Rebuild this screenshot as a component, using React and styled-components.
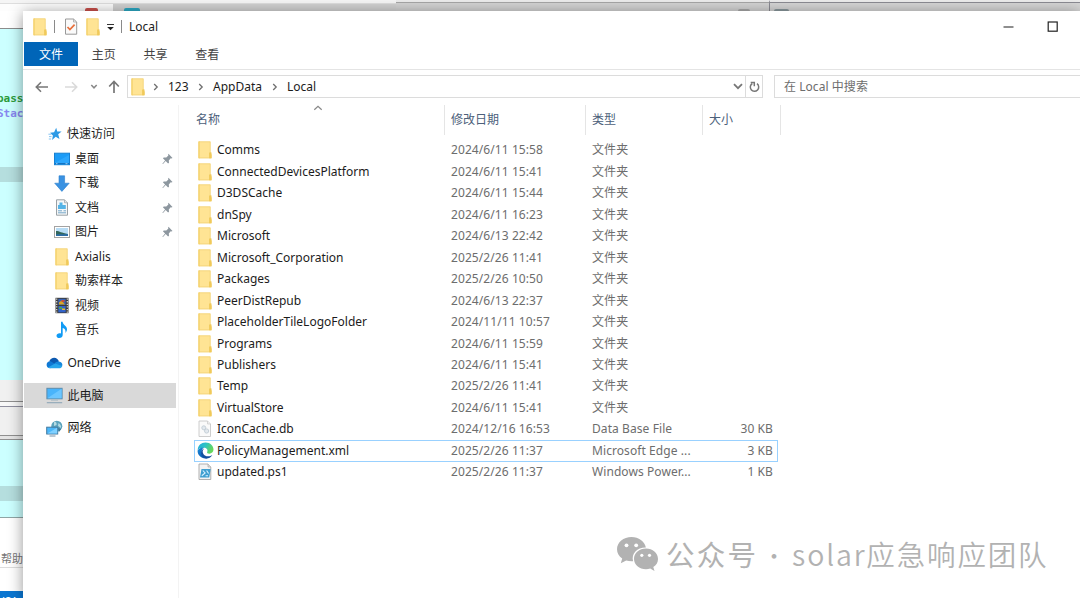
/* eslint-disable react/prop-types */
import styled, { createGlobalStyle } from 'styled-components';

const folders = [
  ["Comms", "2024/6/11 15:58"],
  ["ConnectedDevicesPlatform", "2024/6/11 15:41"],
  ["D3DSCache", "2024/6/11 15:44"],
  ["dnSpy", "2024/6/11 16:23"],
  ["Microsoft", "2024/6/13 22:42"],
  ["Microsoft_Corporation", "2025/2/26 11:41"],
  ["Packages", "2025/2/26 10:50"],
  ["PeerDistRepub", "2024/6/13 22:37"],
  ["PlaceholderTileLogoFolder", "2024/11/11 10:57"],
  ["Programs", "2024/6/11 15:59"],
  ["Publishers", "2024/6/11 15:41"],
  ["Temp", "2025/2/26 11:41"],
  ["VirtualStore", "2024/6/11 15:41"],
];

const files = [
  ...folders.map(([name, date]) => ({ name, date, type: "文件夹", size: "", icon: FolderIcon })),
  { name: "IconCache.db", date: "2024/12/16 16:53", type: "Data Base File", size: "30 KB", icon: DbIcon },
  { name: "PolicyManagement.xml", date: "2025/2/26 11:37", type: "Microsoft Edge ...", size: "3 KB", icon: EdgeIcon, focused: true },
  { name: "updated.ps1", date: "2025/2/26 11:37", type: "Windows Power...", size: "1 KB", icon: ScriptIcon },
];

const quickAccess = [
  { name: "桌面", icon: DesktopIcon, pinned: true },
  { name: "下载", icon: DownloadIcon, pinned: true },
  { name: "文档", icon: DocumentIcon, pinned: true },
  { name: "图片", icon: PictureIcon, pinned: true },
  { name: "Axialis", icon: FolderIcon },
  { name: "勒索样本", icon: FolderIcon },
  { name: "视频", icon: VideoIcon },
  { name: "音乐", icon: MusicIcon },
];

function FolderIcon() {
  return (
    <svg width="16" height="18" viewBox="0 0 16 18">
      <path d="M1.500.5h12v12.400l1 .5v3.800h-13z" fill="#ffe494" />
      <path d="M1.500.5h1.400v16.700H1.500z" fill="#f9d777" />
      <path d="M1.800.8h11.400v12.400l1 .4v3.300H1.800z" fill="none" stroke="#f1d173" strokeWidth=".7" />
      <path d="M12.100 11.700q1-1 2.400-.2v5.700h-2.400z" fill="#f0c95a" />
    </svg>
  );
}

function DbIcon() {
  return (
    <svg width="16" height="18" viewBox="0 0 16 18">
      <path d="M2 1h8.500l3 3v12.500H2z" fill="#fafafa" stroke="#c8c8c8" strokeWidth=".9" />
      <path d="M10.500 1v3h3" fill="#eee" stroke="#c8c8c8" strokeWidth=".7" />
      <circle cx="6.800" cy="7.800" r="2" fill="#e3e9ee" stroke="#c6d0d8" />
      <circle cx="9.600" cy="11" r="2.100" fill="#e3e9ee" stroke="#c6d0d8" />
    </svg>
  );
}

function EdgeIcon() {
  return (
    <svg width="17" height="17" viewBox="0 0 24 24">
      <defs>
        <linearGradient id="edgeTop" x1="0" y1="0" x2="1" y2="0.4">
          <stop offset="0" stopColor="#21a8dd" />
          <stop offset=".5" stopColor="#2cc3c4" />
          <stop offset="1" stopColor="#66d85b" />
        </linearGradient>
        <linearGradient id="edgeSide" x1="0" y1="0" x2="0.6" y2="1">
          <stop offset="0" stopColor="#1a8bd8" />
          <stop offset="1" stopColor="#0c59b3" />
        </linearGradient>
      </defs>
      <path d="M1 12C1 5 6 .8 12 .8c7 0 11.300 5 11.300 9.900 0 4-3 5.800-5.800 5.800-2.500 0-3.800-1-3.200-2.300C16 10.500 13 8 10 8c-5 0-8 1-9 4z" fill="url(#edgeTop)" />
      <path d="M.8 12.500C2 9 6 7.200 10 7.800c-2.500 1.200-4 4.200-3 8.200 1 4 4.500 6.800 8 7C7 25 .8 19 .8 12.500z" fill="url(#edgeSide)" />
      <path d="M10.200 9.300c-3 2-3 7.200 1 9.700 3.500 2 7.500 1.500 10.500-.8-2 3.300-5 5-8.200 5-4.500 0-7.700-4-7.700-7.700 0-3.500 2.200-5.700 4.400-6.200z" fill="#134f9e" />
    </svg>
  );
}

function ScriptIcon() {
  return (
    <svg width="16" height="18" viewBox="0 0 16 18">
      <path d="M2 1h9l2.800 3v12.500H2z" fill="#f3f3f3" stroke="#a8a8a8" strokeWidth=".9" />
      <path d="M11 1v3h2.800" fill="#ddd" stroke="#a8a8a8" strokeWidth=".7" />
      <path d="M4.500 6h9.200l-1.500 8.500H3z" fill="#3f9fd0" />
      <path d="M5.800 7.500l2.300 2.500-3.300 2.700M8.600 12.700H11M9.600 7.500l2 3" stroke="#d9f1ff" strokeWidth="1.100" fill="none" />
    </svg>
  );
}

function StarIcon() {
  return (
    <svg width="14" height="14" viewBox="0 0 14 14">
      <path d="M8.200.8l1 3.700 4.400-.1-3.400 2.900 1.300 4.800-3.800-2.300-3.600 3.200.8-4.500-2.800-2.700 4-.5z" fill="#2c9ae6" />
      <path d="M.4 7.200h3M1 9.600h2.500M.8 12h2.400" stroke="#7abff0" strokeWidth=".9" />
    </svg>
  );
}

function DesktopIcon() {
  return (
    <svg width="16" height="14" viewBox="0 0 16 14">
      <rect x=".5" y="1.200" width="15" height="11.500" fill="#1c9cf7" stroke="#1680d2" />
      <path d="M1 10.800L15 3v9.200H1z" fill="#35adff" opacity=".7" />
      <path d="M1 11.700h14" stroke="#0e69b5" />
      <path d="M2 11.700h1.500M11.500 11.700h2" stroke="#bfe3ff" strokeWidth=".8" />
    </svg>
  );
}

function DownloadIcon() {
  return (
    <svg width="16" height="17" viewBox="0 0 16 17">
      <path d="M5 .8h5.600v7.400h4.600L7.900 16.400.7 8.200H5z" fill="#3a92e2" stroke="#2b7fcc" strokeWidth=".6" />
    </svg>
  );
}

function DocumentIcon() {
  return (
    <svg width="16" height="17" viewBox="0 0 16 17">
      <path d="M2.500.8h8l3 3v12.400h-11z" fill="#f4f6f7" stroke="#9aa1a6" />
      <path d="M10.500.8v3h3" fill="#dfe4e7" stroke="#9aa1a6" strokeWidth=".7" />
      <path d="M5.500 3.500h3V6h3.300v4H4V6h1.500z" fill="#54b3e6" />
      <path d="M4 11.800h4M4 13.800h8M9.500 11.800H12" stroke="#75a8c9" />
    </svg>
  );
}

function PictureIcon() {
  return (
    <svg width="16" height="14" viewBox="0 0 16 14">
      <rect x=".5" y="1.500" width="15" height="11" fill="#fff" stroke="#a3a3a3" />
      <rect x="2" y="3" width="12" height="8" fill="#b7dcf5" />
      <path d="M2 6c4 0 5 2 12 3v2H2z" fill="#33675c" />
      <path d="M2 9.400c4-.5 8 0 12-.5V11H2z" fill="#2d6da6" />
    </svg>
  );
}

function VideoIcon() {
  return (
    <svg width="16" height="17" viewBox="0 0 16 17">
      <path d="M1.500.8h13v15.400h-13z" fill="#3b3b3b" />
      <path d="M2.700 1.500v14.500M13.300 1.500v14.500" stroke="#ddd" strokeWidth="1.200" strokeDasharray="1.300 1.300" />
      <path d="M4.300 1.800h7.400v6H4.300z" fill="#3a63b5" />
      <path d="M4.300 9h7.400v6.400H4.300z" fill="#3263c9" />
      <path d="M5 5.500l2.500-2L11 7.500H5z" fill="#d8a727" />
      <path d="M7.500 3h3v2h-3z" fill="#c74e3b" />
      <path d="M5 10h3v2H5z" fill="#4da054" />
      <path d="M8 11.500h3V13H8z" fill="#e0be34" />
    </svg>
  );
}

function MusicIcon() {
  return (
    <svg width="16" height="18" viewBox="0 0 16 18">
      <path d="M7 .8h1.600c.3 3.300 4.400 4 4.400 7.500 0 1.500-.6 2.700-1.600 3.600.7-3-.8-4.300-2.700-4.900v7.100c0 1.800-1.500 3-3.300 3-1.600 0-2.900-.9-2.900-2.300 0-1.900 2.200-3 4.500-2.300z" fill="#109bf5" />
    </svg>
  );
}

function OneDriveIcon() {
  return (
    <svg width="17" height="12" viewBox="0 0 17 12">
      <path d="M3.300 4.200C4.500 1 8.700-.3 11.300 2c.9.700 1.400 1.500 1.600 2.600L8 7.500z" fill="#0c59b0" />
      <path d="M1 9.500C-.3 6.500 2 3.800 5 4.400l6.500 4-7.500 2.800C2.500 11.200 1.500 10.500 1 9.500z" fill="#0f78d4" />
      <path d="M8.500 6.800c1-1.600 2.500-2.400 4.400-2.200 2.200.2 3.800 2 3.500 4l-2 1.200z" fill="#1587dc" />
      <path d="M2 10.500l7-4 7.300 2.500c-.5 1.400-1.600 2.300-3.300 2.300H4.200c-.9 0-1.600-.3-2.200-.8z" fill="#27a5ec" />
    </svg>
  );
}

function ComputerIcon() {
  return (
    <svg width="17" height="17" viewBox="0 0 17 17">
      <rect x=".9" y="1.300" width="15.200" height="10.500" fill="#49b4fb" stroke="#5c8cac" />
      <path d="M1.400 11.300L15.600 1.800v9.500z" fill="#6cc6ff" />
      <path d="M5 12.600h7v1H5z" fill="#a6b8c4" />
      <path d="M.8 15.700h15.400" stroke="#8ea7b8" strokeWidth="1.100" />
    </svg>
  );
}

function NetworkIcon() {
  return (
    <svg width="17" height="17" viewBox="0 0 17 17">
      <circle cx="10.800" cy="6.200" r="5.500" fill="#5aa2bc" />
      <path d="M8 2c2-.6 3 1 2.500 3L8 6zM12.500 3c2 1 3 3 2.500 5l-3-2z" fill="#b5dae2" />
      <path d="M12 8l3 1-2 3z" fill="#3d7695" />
      <rect x=".7" y="7.200" width="11" height="6.800" fill="#4bb7fa" stroke="#42799e" />
      <path d="M1.200 13.500l10-5.800v5.800z" fill="#7fd0ff" />
      <path d="M3.500 16h6" stroke="#7692a6" />
    </svg>
  );
}

function PinIcon() {
  return (
    <svg width="11" height="12" viewBox="0 0 11 12">
      <path d="M6.500.8l4 4.200-1.100.4-.7-.2-1.900 2.200.2 2.300-.9.900L3.700 8 1 10.900l-.6.200.2-.7L3.100 7.400.9 5.200l.9-.8 2.500.2 2.100-2-.3-.8z" fill="#8d979f" />
    </svg>
  );
}

function CheckPageIcon() {
  return (
    <svg width="14" height="17" viewBox="0 0 14 17">
      <path d="M1.500 1h8L12.700 4v12.200H1.500z" fill="#fafafa" stroke="#999" />
      <path d="M9.500 1v3h3" fill="none" stroke="#a5a5a5" strokeWidth=".8" />
      <path d="M3.500 9l2.400 2.600 4.700-5" fill="none" stroke="#e8703c" strokeWidth="1.700" />
    </svg>
  );
}

function WechatIcon() {
  return (
    <svg width="43" height="37" viewBox="0 0 43 37">
      <path d="M15.500 1C7.500 1 1 6.400 1 13.300c0 3.800 2 7.100 5.200 9.300l-1.400 4.600 5.400-2.800c1.700.5 3.500.8 5.500.8h1.400C15 17.500 21.500 11.300 29.900 11.500 28.600 5.500 22.700 1 15.500 1z" fill="#b2b2b2" />
      <path d="M30 12.600c-6.700 0-12 4.600-12 10.300s5.300 10.300 12 10.300c1.500 0 2.900-.2 4.200-.6l4.300 2.400-1.200-3.900c2.900-1.900 4.700-4.800 4.700-8.200 0-5.700-5.400-10.300-12-10.300z" fill="#b2b2b2" />
      <g fill="#fff">
        <circle cx="10.500" cy="9.300" r="1.900" />
        <circle cx="20.200" cy="9.300" r="1.900" />
        <circle cx="25.800" cy="19.300" r="1.600" />
        <circle cx="33.500" cy="19.300" r="1.600" />
      </g>
    </svg>
  );
}

function Chevron() {
  return (
    <svg width="6" height="8" viewBox="0 0 6 8">
      <path d="M1.200 1l3 3-3 3" fill="none" stroke="#707070" strokeWidth="1.300" />
    </svg>
  );
}

function TitleBar() {
  return (
    <TitleRow>
      <FolderIcon />
      <Tick />
      <CheckPageIcon />
      <FolderIcon />
      <svg width="9" height="8" viewBox="0 0 9 8">
        <path d="M1 1.500h7" stroke="#333" />
        <path d="M1.200 4h6.600L4.500 7.300z" fill="#222" />
      </svg>
      <Tick />
      <Title>Local</Title>
      <WindowButtons>
        <svg width="11" height="12" viewBox="0 0 11 12">
          <path d="M.5 6h10" stroke="#444" strokeWidth="1.200" />
        </svg>
        <svg width="11" height="12" viewBox="0 0 11 12">
          <rect x="1.200" y="1" width="9" height="9.200" fill="none" stroke="#222" strokeWidth="1.200" />
        </svg>
      </WindowButtons>
    </TitleRow>
  );
}

function AddressBar() {
  return (
    <AddressRow>
      <NavButtons>
        <svg width="14" height="12" viewBox="0 0 14 12">
          <path d="M13 6H1.500M6 1.300L1.300 6 6 10.700" fill="none" stroke="#777" strokeWidth="1.600" />
        </svg>
        <svg width="14" height="12" viewBox="0 0 14 12">
          <path d="M1 6h11.500M8 1.300L12.700 6 8 10.700" fill="none" stroke="#dadada" strokeWidth="1.600" />
        </svg>
        <svg width="8" height="6" viewBox="0 0 8 6">
          <path d="M1.300 1l2.700 2.800L6.700 1" fill="none" stroke="#888" strokeWidth="1.500" />
        </svg>
        <svg width="12" height="14" viewBox="0 0 12 14">
          <path d="M6 13V1.500M1.200 6.500L6 1.500l4.800 5" fill="none" stroke="#777" strokeWidth="1.700" />
        </svg>
      </NavButtons>
      <PathBox>
        <FolderIcon />
        <Chevron />
        <Crumb $width={45}>123</Crumb>
        <Chevron />
        <Crumb $width={74}>AppData</Crumb>
        <Chevron />
        <Crumb>Local</Crumb>
        <PathActions>
          <svg width="10" height="7" viewBox="0 0 10 7">
            <path d="M1 1.200l4 4 4-4" fill="none" stroke="#777" strokeWidth="1.800" />
          </svg>
          <Refresh>
            <svg width="11" height="12" viewBox="0 0 11 12">
              <path d="M8 2.700a4.200 4.200 0 1 1-4.700-.2" fill="none" stroke="#777" strokeWidth="1.500" />
              <path d="M1.700 1.400h3.600v3.800" fill="none" stroke="#777" strokeWidth="1.500" />
            </svg>
          </Refresh>
        </PathActions>
      </PathBox>
      <SearchBox>在 Local 中搜索</SearchBox>
    </AddressRow>
  );
}

function Sidebar() {
  return (
    <SidebarParent>
      <SidebarItem $indent={26}>
        <StarIcon />
        <span>快速访问</span>
      </SidebarItem>
      {quickAccess.map((item) => (
        <SidebarItem key={item.name} $indent={32}>
          <item.icon />
          <span>{item.name}</span>
          {item.pinned && <PinSlot><PinIcon /></PinSlot>}
        </SidebarItem>
      ))}
      <SidebarItem $indent={24} $gap>
        <OneDriveIcon />
        <span>OneDrive</span>
      </SidebarItem>
      <SidebarItem $indent={24} $gap $active>
        <ComputerIcon />
        <span>此电脑</span>
      </SidebarItem>
      <SidebarItem $indent={24} $gap>
        <NetworkIcon />
        <span>网络</span>
      </SidebarItem>
    </SidebarParent>
  );
}

function FileList() {
  return (
    <ListPane>
      <ListHeader>
        <HeaderCell>
          名称
          <SortMark width="10" height="6" viewBox="0 0 10 6">
            <path d="M1.300 4.800L5 1.300l3.700 3.500" fill="none" stroke="#888" strokeWidth="1.200" />
          </SortMark>
        </HeaderCell>
        <HeaderCell>修改日期</HeaderCell>
        <HeaderCell>类型</HeaderCell>
        <HeaderCell>大小</HeaderCell>
      </ListHeader>
      {files.map((file) => (
        <FileRow key={file.name} $focused={file.focused}>
          <IconSlot><file.icon /></IconSlot>
          <FileName>{file.name}</FileName>
          <span>{file.date}</span>
          <span>{file.type}</span>
          <FileSize>{file.size}</FileSize>
        </FileRow>
      ))}
    </ListPane>
  );
}

export default function App() {
  return (
    <>
      <GlobalStyle />
      <Screen>
        <TopEdge>
          <TopTab $width={113} $bg="#fdfdfd"><TabDot $color="#c9504b" $left={85} $width={13} /></TopTab>
          <TopTab $width={283} $bg="#d2d2d2"><TabDot $color="#2ca9c4" $left={11} $width={16} /></TopTab>
          <TopTab $width={373} $bg="#d4d4d4" $line="#a6a6a6"><TabDot $color="#a9a9a9" $left={342} $width={12} /></TopTab>
          <TopTab $width={311} $bg="#d6d6d6" $line="#8b8b93" $edge><TabDot $color="#8b999d" $left={4} $width={15} /></TopTab>
        </TopEdge>
        <LeftEdge>
          <Strip $height={17.500} $bg="#fff" $line="#8c8c8c" />
          <CodeStrip>
            <CodeText $color="#2d9c3c">pass</CodeText>
            <CodeText $color="#8888f0">Stac</CodeText>
          </CodeStrip>
          <Strip $height={15} $bg="#b5dede" />
          <Strip $height={198} $bg="#ccffff" />
          <Strip $height={22} $bg="#f0f0f0" $line="#8f8f8f" />
          <Strip $height={5} $bg="#f8f8f8" $line="#8f8f9f" />
          <Strip $height={29} $bg="#f0f0f0" $line="#8f8f8f" />
          <Strip $height={4} $bg="#e4e4e4" $line="#8f8f8f" />
          <Strip $height={46} $bg="#ccffff" />
          <Strip $height={15} $bg="#b5dede" />
          <Strip $height={17} $bg="#ccffff" $line="#8fa5a5" />
          <Strip $height={50} $bg="#fff" $line="#ddd"><HelpText>帮助</HelpText></Strip>
          <Strip $height={23} $bg="#fff" />
          <Strip $height={7} $bg="#0b76d1"><StatusText>USA</StatusText></Strip>
        </LeftEdge>
        <Window>
          <TitleBar />
          <Ribbon>
            <RibbonTab $active>文件</RibbonTab>
            <RibbonTab>主页</RibbonTab>
            <RibbonTab>共享</RibbonTab>
            <RibbonTab>查看</RibbonTab>
          </Ribbon>
          <AddressBar />
          <Body>
            <Sidebar />
            <FileList />
          </Body>
        </Window>
        <Watermark>
          <WechatIcon />
          <Account>公众号</Account>
          <Dot>·</Dot>
          <Team>solar应急响应团队</Team>
        </Watermark>
      </Screen>
    </>
  );
}

const GlobalStyle = createGlobalStyle`
  body {
    margin: 0;
    overflow: hidden;
    background: #fff;
  }

  * {
    box-sizing: border-box;
  }

  svg {
    display: block;
    flex-shrink: 0;
  }
`;

const Screen = styled.div`
  position: relative;
  display: grid;
  grid-template-columns: 23px 1057px;
  grid-template-rows: 11px 587px;
  width: 1080px;
  height: 598px;
  overflow: hidden;
  font-family: "Noto Sans", "Noto Sans CJK SC", sans-serif;
  font-size: 12px;
  line-height: 16px;
  color: #1c1c1c;
  white-space: nowrap;
`;

const TopEdge = styled.div`
  grid-column: 1 / 3;
  display: flex;
  background: #f5f5f5;
`;

const TopTab = styled.div`
  width: ${props => props.$width}px;
  height: 11px;
  padding-top: ${props => props.$line ? 7 : 5}px;
  border-top: ${props => props.$line ? "2px solid #ececec" : "3px solid #f5f5f5"};
  border-left: ${props => props.$edge ? "1px solid #8b8b93" : "none"};
  background: ${props => props.$bg};
  box-shadow: inset 0 1px 0 ${props => props.$line || "#dedede"};
`;

const TabDot = styled.div`
  width: ${props => props.$width}px;
  height: 3px;
  margin-left: ${props => props.$left}px;
  background: ${props => props.$color};
  border-radius: 2px 2px 0 0;
`;

const LeftEdge = styled.div`
  display: flex;
  flex-direction: column;
  overflow: hidden;
`;

const Strip = styled.div`
  flex: none;
  height: ${props => props.$height}px;
  overflow: hidden;
  background: ${props => props.$bg};
  border-bottom: ${props => props.$line ? `1px solid ${props.$line}` : "none"};
`;

const CodeStrip = styled.div`
  flex: none;
  height: 138.500px;
  padding-top: 62px;
  background: #ccffff;
`;

const CodeText = styled.div`
  height: 15.500px;
  margin-left: -3px;
  font: bold 11px/15px "DejaVu Sans Mono", monospace;
  color: ${props => props.$color};
`;

const HelpText = styled.div`
  padding: 33px 0 0 1px;
  font-size: 11px;
  color: #777;
`;

const StatusText = styled.div`
  margin-left: -3px;
  padding-top: 3px;
  font-size: 11px;
  line-height: 14px;
  color: #fff;
`;

const Window = styled.div`
  position: relative;
  display: flex;
  flex-direction: column;
  background: #fff;
  box-shadow: 0 2px 14px rgba(0, 0, 0, 0.42);
`;

const TitleRow = styled.div`
  display: flex;
  align-items: center;
  height: 31px;
  padding-left: 9px;

  & > svg:nth-of-type(2) {
    margin: 0 7px 0 9px;
  }

  & > svg:nth-of-type(4) {
    margin: 1px 0 0 5px;
  }
`;

const Tick = styled.div`
  width: 1px;
  height: 13px;
  margin-left: 6px;
  background: #8a8a8a;

  & + div {
    margin-left: 7px;
  }
`;

const Title = styled.div`
  flex: 1;
`;

const WindowButtons = styled.div`
  display: flex;
  gap: 33px;
  padding-right: 22px;
`;

const Ribbon = styled.div`
  display: flex;
  height: 28px;
  padding-left: 1px;
  border-bottom: 1px solid #e4e4e4;
`;

const RibbonTab = styled.div`
  width: ${props => props.$active ? 54 : 51.700}px;
  height: 24px;
  line-height: 26px;
  text-align: center;
  color: ${props => props.$active ? "#fff" : "#444"};
  background: ${props => props.$active ? "#0065b8" : "transparent"};
`;

const AddressRow = styled.div`
  display: flex;
  align-items: center;
  height: 33px;
`;

const NavButtons = styled.div`
  display: flex;
  align-items: center;
  width: 104px;
  padding-left: 12px;

  svg:nth-child(2) {
    margin: 0 12px 0 15px;
  }

  svg:nth-child(4) {
    margin-left: 10px;
  }
`;

const PathBox = styled.div`
  display: flex;
  align-items: center;
  width: 636px;
  height: 23px;
  padding-left: 2px;
  border: 1px solid #dcdcdc;

  & > svg:first-child {
    margin-right: 7px;
  }
`;

const Crumb = styled.div`
  width: ${props => props.$width ? `${props.$width - 6}px` : "auto"};
  padding-left: 9px;
`;

const PathActions = styled.div`
  display: flex;
  align-items: center;
  gap: 2px;
  height: 100%;
  margin-left: auto;
`;

const Refresh = styled.div`
  display: flex;
  align-items: center;
  justify-content: center;
  width: 17px;
  height: 100%;
  border-left: 1px solid #dcdcdc;
`;

const SearchBox = styled.div`
  flex: 1;
  height: 23px;
  margin-left: 11px;
  padding-left: 9px;
  border: 1px solid #dcdcdc;
  border-right: none;
  line-height: 22px;
  letter-spacing: 0.050px;
  color: #6d6d6d;
`;

const Body = styled.div`
  display: flex;
  flex: 1;
  padding-top: 1px;
`;

const SidebarParent = styled.div`
  width: 156px;
  margin-top: 1px;
  padding-top: 17px;
  border-right: 1px solid #f3f3f3;
`;

const SidebarItem = styled.div`
  display: flex;
  align-items: center;
  gap: 5px;
  width: 152px;
  height: 24.500px;
  margin: ${props => props.$gap ? "8.200px 0 0 1px" : "0 0 0 1px"};
  padding-left: ${props => props.$indent - 2}px;
  background: ${props => props.$active ? "#d9d9d9" : "transparent"};

  span {
    margin-left: ${props => props.$gap ? "-0.500px" : "0"};
  }
`;

const PinSlot = styled.div`
  margin-left: auto;
  padding: 0 3px 0 0;
`;

const ListPane = styled.div`
  flex: 1;
  padding-left: 15px;
`;

const ListHeader = styled.div`
  display: grid;
  grid-template-columns: 251px 141px 117px 78px;
  height: 29px;
  margin: 1px 0 5.600px;
`;

const HeaderCell = styled.div`
  position: relative;
  padding-left: 6px;
  border-right: 1px solid #e5e5e5;
  line-height: 30px;
  color: #4c607a;

  &:first-child {
    padding-left: 2px;
  }
`;

const SortMark = styled.svg`
  position: absolute;
  top: 0;
  left: 119px;
`;

const FileRow = styled.div`
  display: grid;
  grid-template-columns: 22px 234px 141px 110px 71px;
  align-items: center;
  width: 584px;
  height: 21.470px;
  border: 1px solid ${props => props.$focused ? "#99d1ff" : "transparent"};
  color: #6d6d6d;
  letter-spacing: 0.080px;
`;

const IconSlot = styled.div`
  display: flex;
  justify-content: center;
  width: 20px;
`;

const FileName = styled.span`
  letter-spacing: 0;
  color: #1c1c1c;
`;

const FileSize = styled.span`
  text-align: right;
`;

const Watermark = styled.div`
  position: absolute;
  left: 616px;
  top: 535px;
  display: flex;
  align-items: center;
  height: 38px;
  color: #b2b2b2;
  font-family: "Noto Sans CJK SC", sans-serif;
  font-size: 28.500px;
  line-height: 36px;
  letter-spacing: 2.200px;
`;

const Account = styled.span`
  margin-left: 7px;
`;

const Dot = styled.span`
  width: 34px;
  text-align: center;
  font-size: 22px;
`;

const Team = styled.span`
  font-weight: 350;
  letter-spacing: 1.850px;
`;
